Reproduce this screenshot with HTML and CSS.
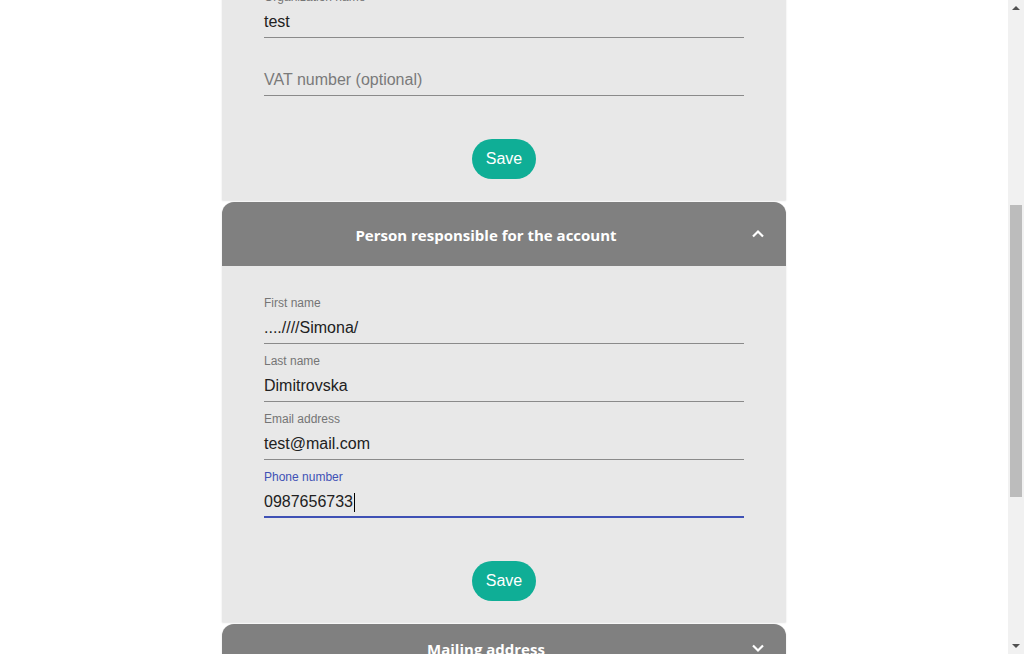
FILE: index.html
```html
<!DOCTYPE html>
<html>
<head>
<meta charset="utf-8">
<link rel="stylesheet" href="styles.css">
</head>
<body>
<div class="page">
  <main class="viewport">
    <div class="content">
      <section class="panel panel-open">
        <div class="panel-body">
          <div class="field">
            <div class="field-label">Organization name</div>
            <div class="field-value">test</div>
          </div>
          <div class="field">
            <div class="field-label"></div>
            <div class="field-value placeholder">VAT number (optional)</div>
          </div>
          <div class="actions"><button class="save-btn">Save</button></div>
        </div>
      </section>

      <section class="panel panel-open">
        <header class="panel-header">
          <div class="panel-title">Person responsible for the account</div>
          <div class="panel-icon">
            <svg width="14" height="10" viewBox="0 0 14 10"><path d="M2 7.5 L7 2.5 L12 7.5" fill="none" stroke="#fff" stroke-width="2.2"/></svg>
          </div>
        </header>
        <div class="panel-body">
          <div class="field">
            <div class="field-label">First name</div>
            <div class="field-value">....////Simona/</div>
          </div>
          <div class="field">
            <div class="field-label">Last name</div>
            <div class="field-value">Dimitrovska</div>
          </div>
          <div class="field">
            <div class="field-label">Email address</div>
            <div class="field-value">test@mail.com</div>
          </div>
          <div class="field field-focused">
            <div class="field-label">Phone number</div>
            <div class="field-value">0987656733<span class="caret"></span></div>
          </div>
          <div class="actions"><button class="save-btn">Save</button></div>
        </div>
      </section>

      <section class="panel panel-closed">
        <header class="panel-header">
          <div class="panel-title">Mailing address</div>
          <div class="panel-icon">
            <svg width="14" height="10" viewBox="0 0 14 10"><path d="M2 2.5 L7 7.5 L12 2.5" fill="none" stroke="#fff" stroke-width="2.2"/></svg>
          </div>
        </header>
      </section>
    </div>
  </main>
  <aside class="scrollbar">
    <div class="sb-arrow sb-up"></div>
    <div class="sb-track">
      <div class="sb-space-top"></div>
      <div class="sb-thumb"></div>
    </div>
    <div class="sb-arrow sb-down"></div>
  </aside>
</div>
</body>
</html>
```

FILE: styles.css
```css
* { box-sizing: border-box; }
html, body { margin: 0; padding: 0; height: 100%; }
body {
  background: #fff;
  font-family: "Liberation Sans", Arial, sans-serif;
  overflow: hidden;
}
.page {
  display: flex;
  width: 1024px;
  height: 654px;
}
.viewport {
  flex: 1;
  height: 654px;
  overflow: hidden;
}
.content {
  width: 564px;
  margin: -40px auto 0;
  display: flex;
  flex-direction: column;
  gap: 2px;
}
.panel {
  background: #e8e8e8;
  border-radius: 12px 12px 0 0;
  box-shadow: 0 1px 2px rgba(0,0,0,0.10), 0 0 1px rgba(0,0,0,0.10);
}
.panel-header {
  height: 64px;
  background: #808080;
  border-radius: 12px 12px 0 0;
  display: flex;
  align-items: center;
  padding: 0 16px 0 24px;
  color: #fff;
}
.panel-closed .panel-header {
  height: 48px;
  padding-top: 0;
}
.panel-title {
  flex: 1;
  text-align: center;
  font-family: "Open Sans", sans-serif;
  font-weight: 700;
  font-size: 15px;
  margin-right: 20px;
  padding-top: 1px;
}
.panel-icon {
  width: 24px;
  height: 24px;
  display: flex;
  align-items: center;
  justify-content: center;
}
.panel-body {
  padding: 20px 42px 21px;
}
.field {
  height: 58px;
  padding-top: 10px;
  border-bottom: 1px solid #8a8a8a;
}
.field-label {
  height: 14px;
  font-size: 12px;
  line-height: 14px;
  color: #757575;
}
.field-value {
  margin-top: 8px;
  height: 20px;
  font-size: 16px;
  line-height: 20px;
  color: #212121;
  display: flex;
  align-items: center;
}
.field-value.placeholder { color: #7a7a7a; }
.field-focused {
  border-bottom: 2px solid #3f51b5;
}
.field-focused .field-label { color: #3f51b5; }
.caret {
  display: inline-block;
  width: 1px;
  height: 19px;
  background: #000;
  margin-left: 1px;
}
.actions {
  display: flex;
  justify-content: center;
  padding-top: 43px;
}
.save-btn {
  width: 64px;
  height: 40px;
  border: none;
  border-radius: 20px;
  background: #0fae96;
  color: #fff;
  font-family: "Liberation Sans", Arial, sans-serif;
  font-size: 16px;
  padding: 0;
}
.scrollbar {
  width: 16px;
  height: 654px;
  background: #f1f1f1;
  display: flex;
  flex-direction: column;
}
.sb-arrow {
  height: 16px;
  display: flex;
  align-items: center;
  justify-content: center;
}
.sb-up::before {
  content: "";
  border-left: 4px solid transparent;
  border-right: 4px solid transparent;
  border-bottom: 4px solid #505050;
}
.sb-down::before {
  content: "";
  border-left: 4px solid transparent;
  border-right: 4px solid transparent;
  border-top: 4px solid #505050;
}
.sb-track {
  flex: 1;
  display: flex;
  flex-direction: column;
  align-items: center;
}
.sb-space-top { height: 189px; }
.sb-thumb {
  width: 12px;
  height: 292px;
  background: #bcbcbc;
}
```
